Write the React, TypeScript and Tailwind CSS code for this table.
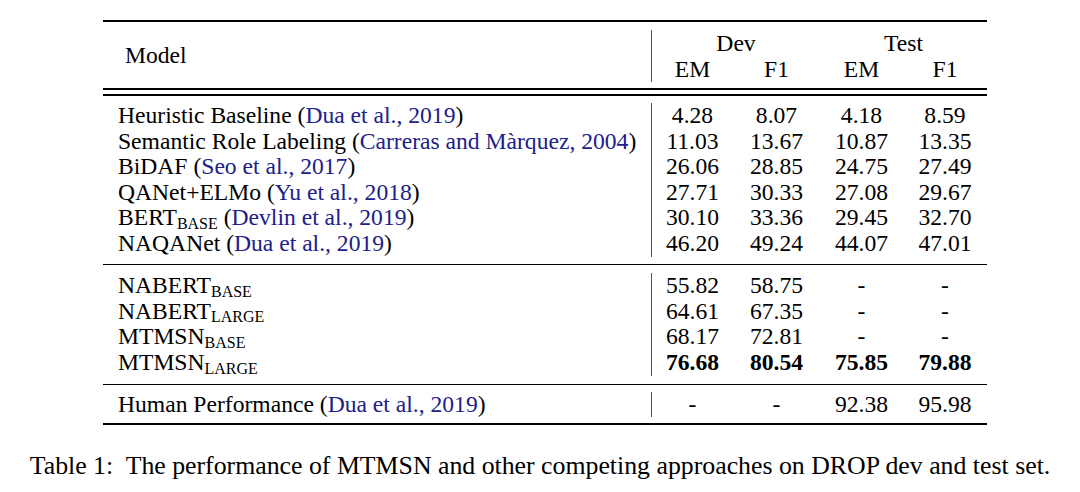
import React from "react";

const LINK = "text-[#20208a]";

type Row = {
  name: React.ReactNode;
  vals: string[];
  bold?: boolean;
};

function Sub({ children }: { children: React.ReactNode }) {
  return <span className="relative top-[3.5px] text-[16px] leading-none">{children}</span>;
}

function Cite({ children }: { children: React.ReactNode }) {
  return (
    <>
      {" "}(<span className={LINK}>{children}</span>)
    </>
  );
}

const block1: Row[] = [
  { name: <>Heuristic Baseline<Cite>Dua et al., 2019</Cite></>, vals: ["4.28", "8.07", "4.18", "8.59"] },
  { name: <>Semantic Role Labeling<Cite>Carreras and Màrquez, 2004</Cite></>, vals: ["11.03", "13.67", "10.87", "13.35"] },
  { name: <>BiDAF<Cite>Seo et al., 2017</Cite></>, vals: ["26.06", "28.85", "24.75", "27.49"] },
  { name: <>QANet+ELMo<Cite>Yu et al., 2018</Cite></>, vals: ["27.71", "30.33", "27.08", "29.67"] },
  { name: <>BERT<Sub>BASE</Sub><Cite>Devlin et al., 2019</Cite></>, vals: ["30.10", "33.36", "29.45", "32.70"] },
  { name: <>NAQANet<Cite>Dua et al., 2019</Cite></>, vals: ["46.20", "49.24", "44.07", "47.01"] },
];

const block2: Row[] = [
  { name: <>NABERT<Sub>BASE</Sub></>, vals: ["55.82", "58.75", "-", "-"] },
  { name: <>NABERT<Sub>LARGE</Sub></>, vals: ["64.61", "67.35", "-", "-"] },
  { name: <>MTMSN<Sub>BASE</Sub></>, vals: ["68.17", "72.81", "-", "-"] },
  { name: <>MTMSN<Sub>LARGE</Sub></>, vals: ["76.68", "80.54", "75.85", "79.88"], bold: true },
];

const block3: Row[] = [
  { name: <>Human Performance<Cite>Dua et al., 2019</Cite></>, vals: ["-", "-", "92.38", "95.98"] },
];

const GRID = "grid grid-cols-[81px_87px_83px_84px]";

function Block({ rows, pt, pb }: { rows: Row[]; pt: string; pb: string }) {
  return (
    <div className={`flex ${pt} ${pb}`}>
      <div className="w-[548px] pl-[15px]">
        {rows.map((r, i) => (
          <div key={i} className="h-[25.6px] leading-[25.6px] whitespace-nowrap">
            {r.name}
          </div>
        ))}
      </div>
      <div className="flex-1 border-l border-[#5a5a5a]">
        {rows.map((r, i) => (
          <div key={i} className={`${GRID} h-[25.6px] leading-[25.6px] ${r.bold ? "font-bold" : ""}`}>
            {r.vals.map((v, j) => (
              <div key={j} className="text-center">
                {v}
              </div>
            ))}
          </div>
        ))}
      </div>
    </div>
  );
}

export default function App() {
  return (
    <div className="w-[1080px] h-[492px] bg-white overflow-hidden text-black font-['Liberation_Serif',serif] text-[23.6px]">
      <div className="ml-[103px] pt-[20px] w-[884px]">
        <div className="h-[2px] bg-black" />
        {/* header */}
        <div className="flex pt-[8px] pb-[6px]">
          <div className="w-[548px] pl-[22px] flex items-center leading-[25.6px]">Model</div>
          <div className="flex-1 border-l border-[#5a5a5a]">
            <div className={`${GRID} h-[26px] leading-[26px]`}>
              <div className="col-span-2 text-center">Dev</div>
              <div className="col-span-2 text-center">Test</div>
            </div>
            <div className={`${GRID} h-[26px] leading-[26px]`}>
              <div className="text-center">EM</div>
              <div className="text-center">F1</div>
              <div className="text-center">EM</div>
              <div className="text-center">F1</div>
            </div>
          </div>
        </div>
        <div className="h-[1.5px] bg-black" />
        <div className="h-[4.5px]" />
        <div className="h-[1.5px] bg-black" />
        <Block rows={block1} pt="pt-[7.5px]" pb="pb-[7px]" />
        <div className="h-[1.2px] bg-black" />
        <Block rows={block2} pt="pt-[8.5px]" pb="pb-[8px]" />
        <div className="h-[1.2px] bg-black" />
        <Block rows={block3} pt="pt-[7px]" pb="pb-[6px]" />
        <div className="h-[2px] bg-black" />
      </div>
      <div className="mt-[26px] text-center text-[25.8px] leading-[30px] whitespace-nowrap">
        Table 1:{"\u00a0 "}The performance of MTMSN and other competing approaches on DROP dev and test set.
      </div>
    </div>
  );
}
